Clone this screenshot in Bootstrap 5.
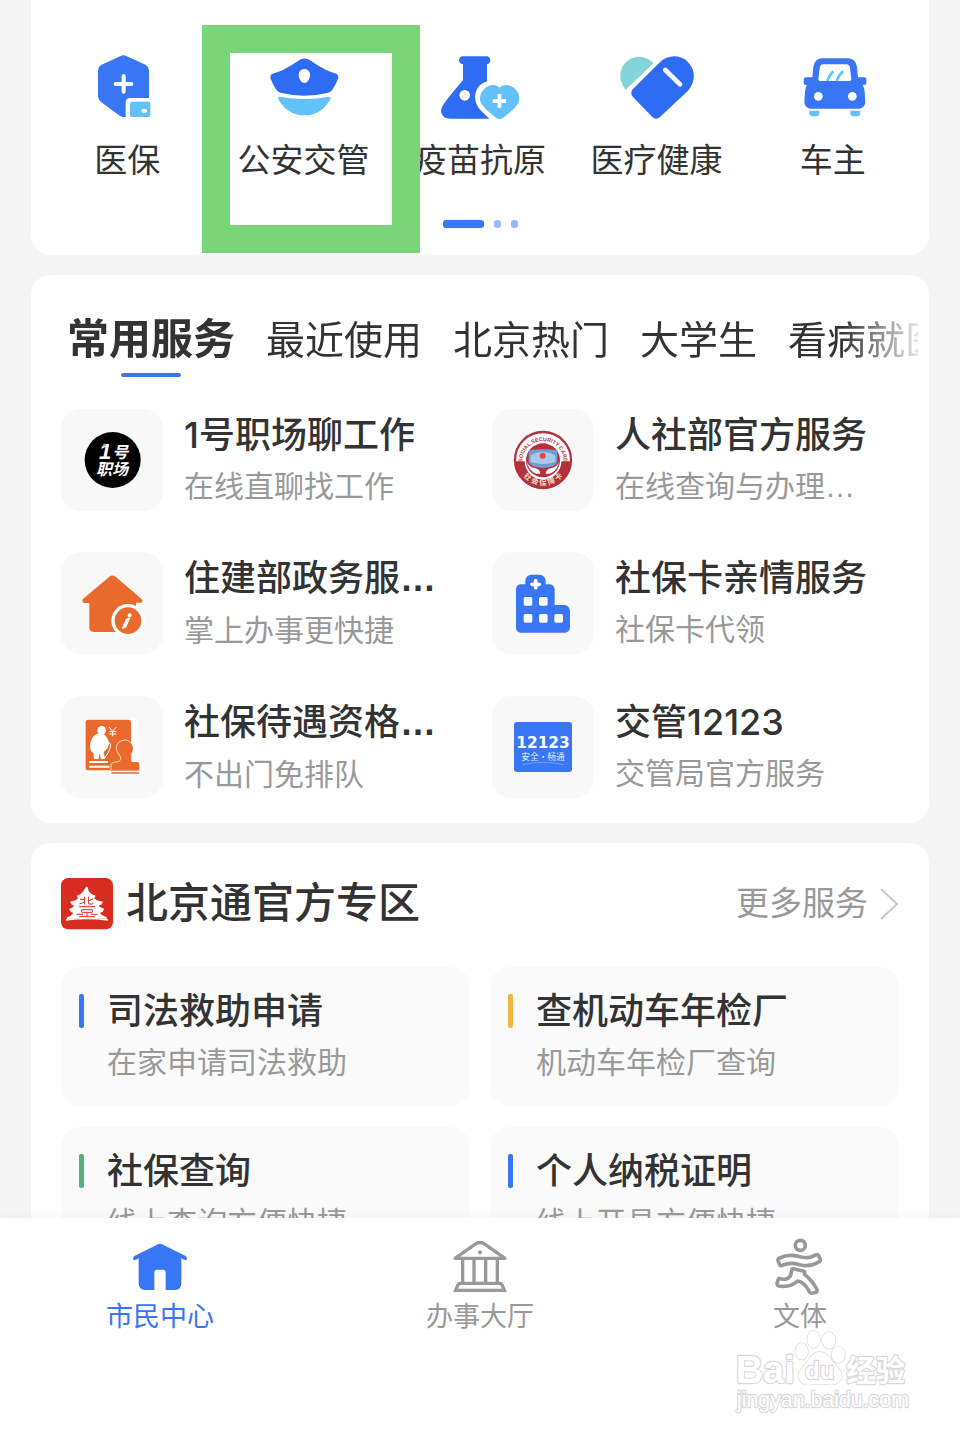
<!DOCTYPE html>
<html lang="zh-CN">
<head>
<meta charset="utf-8">
<meta name="viewport" content="width=device-width, initial-scale=1">
<title>市民中心</title>
<link rel="stylesheet" href="https://cdn.jsdelivr.net/npm/bootstrap@5.3.0/dist/css/bootstrap.min.css">
<style>
  :root { --ink: #333; --soft: #999; --blue: #3876f6; --sky: #63c1fa; }
  body { background: #f5f5f5; color: var(--ink); font-family: "Liberation Sans", "Noto Sans CJK SC", sans-serif; }
  a { color: inherit; text-decoration: none; }
  svg { display: block; flex: none; }
  .page-scroll { padding: 0 31px; overflow-y: auto; scrollbar-width: none; min-height: 0; }
  .page-scroll::-webkit-scrollbar { display: none; }
  .panel { background: #fff; border-radius: 20px; margin-bottom: 20px; }
  .panel-top { border-radius: 0 0 20px 20px; padding: 54px 8px 27px; }
  .quick { font-size: 33px; line-height: 42px; gap: 20px; flex: 1 1 0; white-space: nowrap; }
  .highlight-frame { position: absolute; top: -29px; left: -13px; right: -28px; height: 228px; border: 28px solid #7ad578; z-index: 2; pointer-events: none; }
  .dots { gap: 10px; padding-top: 38px; }
  .dots span { width: 7px; height: 8px; border-radius: 3px; background: #98bafa; }
  .dots .on { width: 41px; background: var(--blue); }
  .panel-services { padding: 32px 30px 22px; }
  .tabs-row { gap: 31px; margin: 0 -19px 30px 6px; height: 72px; overflow: hidden; white-space: nowrap; font-size: 39px; line-height: 68px;
    -webkit-mask-image: linear-gradient(to left, rgba(0,0,0,.12), #000 76px); mask-image: linear-gradient(to left, rgba(0,0,0,.12), #000 76px); }
  .tabs-row button { display: flex; align-items: flex-start; border: 0; padding: 0; background: none; color: inherit; font: inherit; line-height: inherit; flex: none; position: relative; }
  .tabs-row .current { font-size: 42px; font-weight: 700; line-height: 66px; }
  .tabs-row .current::after { content: ""; position: absolute; left: 50%; margin-left: -30px; width: 60px; bottom: 2px; height: 4px; border-radius: 2px; background: var(--blue); }
  .service-grid { display: grid; grid-template-columns: 1fr 1fr; column-gap: 24px; row-gap: 39px; }
  .service { gap: 21px; white-space: nowrap; }
  .tile { width: 102px; height: 102px; border-radius: 20px; background: #f8f8f8; }
  .item-title { font-family: Inter, "Liberation Sans", "Noto Sans CJK SC", sans-serif; font-size: 36px; font-weight: 500; line-height: 52px; }
  .dots3 { font-family: "Liberation Sans", sans-serif; font-weight: 700; }
  .item-sub { font-size: 30px; line-height: 52px; color: var(--soft); }
  .panel-zone { padding: 35px 30px 30px; margin-bottom: 0; }
  .zone-head { gap: 13px; }
  .zone-title { font-size: 42px; font-weight: 500; line-height: 52px; margin: 0; }
  .more { font-size: 33px; line-height: 52px; color: var(--soft); gap: 12px; }
  .zone-grid { display: grid; grid-template-columns: 1fr 1fr; gap: 21px 20px; margin-top: 37px; }
  .zone-item { background: #fafafa; border-radius: 20px; padding: 18px 18px 17px; gap: 23px; white-space: nowrap; }
  .zone-item::before { content: ""; flex: none; width: 5px; height: 34px; margin-top: 9px; border-radius: 2px; background: var(--bar); }
  .bar-blue { --bar: #3876f6; } .bar-amber { --bar: #f0b83c; } .bar-green { --bar: #54b284; }
  .tabbar { background: #fff; padding: 19px 0 95px; box-shadow: 0 -3px 10px rgba(0,0,0,.03); color: var(--soft); font-size: 27px; line-height: 41px; }
  .tabbar .active { color: var(--blue); }
  .watermark { position: absolute; right: 47px; bottom: 17px; }
</style>
</head>
<body class="vh-100 d-flex flex-column overflow-hidden">

<main class="page-scroll flex-grow-1">
  <section class="panel panel-top">
    <div class="d-flex">
      <a href="#" class="quick d-flex flex-column align-items-center">
        <svg width="84" height="66" viewBox="76 102 252 198">
          <path fill="#3876f6" d="M183 108q8-4 17 0l59 27q9 6 9 16v83h-56q-14 0-14 14v43h-8q-7-1-13-6l-54-40q-8-7-8-16v-78q0-10 9-16z"/>
          <path d="M192 168v47M168 192h47" stroke="#fff" stroke-width="12" stroke-linecap="round"/>
          <rect x="211" y="245" width="61" height="46" rx="6" fill="#63c1fa"/><rect x="246" y="267" width="16" height="11" rx="4" fill="#fff"/>
        </svg>
        <span>医保</span>
      </a>
      <a href="#" class="quick d-flex flex-column align-items-center position-relative">
        <svg width="84" height="66" viewBox="605 102 252 198">
          <path fill="#2f6cf4" d="M721 118q11-5 23 0 26 18 52 31 17 8 32 12 7 3 6 12-6 19-18 36-5 7-15 10-69 16-138 0-10-3-15-10-12-17-18-36-1-9 6-12 16-4 33-12 26-13 52-31z"/>
          <path fill="#fff" d="M732 147c10 0 17 8 17 17 0 12-8 25-17 25s-17-13-17-25c0-9 7-17 17-17z"/>
          <path fill="#63c1fa" d="M658 230q74 14 148 0 6 0 5 6c-17 32-44 50-79 50s-61-18-79-50q-1-6 5-6z"/>
        </svg>
        <span>公安交管</span>
        <i class="highlight-frame"></i>
      </a>
      <a href="#" class="quick d-flex flex-column align-items-center">
        <svg width="84" height="66" viewBox="84 102 252 198">
          <path fill="#2f6cf4" d="M155 109h77q9 3 9 12t-10 12v51c-38 12-49 58-16 90l23 22H118c-20 0-31-20-21-37 17-28 41-52 62-79v-47q-12-3-12-12t8-12z"/>
          <circle cx="164" cy="226" r="16" fill="#fff"/>
          <path fill="#63c1fa" d="M269 203c12-13 33-9 46 3 14 14 18 34 6 50-12 15-27 26-42 38q-10 6-20 0c-15-12-30-23-42-38-12-16-8-36 6-50 13-12 34-16 46-3z"/>
          <path fill="#fff" d="M263 222h11v16h14v11h-14v14h-11v-14h-15v-11h15z"/>
        </svg>
        <span>疫苗抗原</span>
      </a>
      <a href="#" class="quick d-flex flex-column align-items-center">
        <svg width="84" height="66" viewBox="613 102 252 198">
          <path fill="#83d3db" d="M648 209c-49-63 25-133 84-80z"/>
          <path fill="#2f6cf4" d="M669 208l80-80c26-26 63-24 85-3 25 24 24 62 1 87l-84 79q-12 10-23 0l-58-60q-10-12-1-23z"/>
          <path d="M767 150l44 43" stroke="#fff" stroke-width="14" stroke-linecap="round"/>
        </svg>
        <span>医疗健康</span>
      </a>
      <a href="#" class="quick d-flex flex-column align-items-center">
        <svg width="84" height="66" viewBox="1142 102 252 198">
          <path fill="#3876f6" d="M1235 115h78q24 2 27 26l3 31h20q5 1 5 6v13q-1 4-11 4 5 8 6 20l2 31q0 16-17 20h-149q-17-4-17-20l2-31q1-12 6-20-9 0-10-4v-13q0-5 5-6h21l3-31q3-24 26-26z"/>
          <path fill="#fff" d="M1238 133h70q10 1 11 11l4 33q0 5-4 6h-91q-4-1-4-6l4-33q2-10 10-11z"/>
          <path d="M1251 183q7-19 18-29M1279 183q7-19 19-29" fill="none" stroke="#63c1fa" stroke-width="8"/>
          <g fill="#fff"><circle cx="1224" cy="229" r="13"/><circle cx="1326" cy="229" r="13"/></g>
          <g fill="#63c1fa"><path d="M1197 272h30v9q-1 7-8 8h-14q-8-1-8-8zM1320 272h30v9q-1 7-8 8h-14q-8-1-8-8z"/></g>
        </svg>
        <span>车主</span>
      </a>
    </div>
    <div class="dots d-flex justify-content-center"><span class="on"></span><span></span><span></span></div>
  </section>

  <section class="panel panel-services">
    <div class="tabs-row d-flex" role="tablist">
      <button type="button" role="tab" class="current" aria-selected="true">常用服务</button>
      <button type="button" role="tab">最近使用</button>
      <button type="button" role="tab">北京热门</button>
      <button type="button" role="tab">大学生</button>
      <button type="button" role="tab">看病就医</button>
    </div>
    <div class="service-grid">
      <a href="#" class="service d-flex">
        <svg class="tile" viewBox="93 417 306 306">
          <circle cx="248" cy="570" r="84"/>
          <g fill="#fff" font-weight="700" font-style="italic" font-family="'Liberation Sans','Noto Sans CJK SC',sans-serif">
            <text x="207" y="567" font-size="66">1</text><text x="247" y="565" font-size="48">号</text><text x="198" y="616" font-size="48">职场</text>
          </g>
          <path fill="#4fd0b5" d="M221 521h9l-3 8h-9z"/>
        </svg>
        <div><div class="item-title">1号职场聊工作</div><div class="item-sub">在线直聊找工作</div></div>
      </a>
      <a href="#" class="service d-flex">
        <svg class="tile" viewBox="36 417 306 306">
          <circle cx="189" cy="570" r="84" fill="#fff" stroke="#b5313a" stroke-width="7"/>
          <path d="M106 574a83 83 0 0 0 166 0h-28a55 55 0 0 1-110 0z" fill="#b5313a"/>
          <circle cx="189" cy="571" r="51" fill="#b5313a"/>
          <path d="M139 570q4 20 24 24 18 4 18 17h-12q-24-8-30-41zM239 570q-4 20-24 24-18 4-18 17h12q24-8 30-41z" fill="#fff"/>
          <path d="M146 541q43-6 86 0v35q-5 16-43 18-38-2-43-18z" fill="#6d9fd4"/>
          <path d="M152 556q37-22 74 0v20q-37 12-74 0z" fill="#a9c8ea"/>
          <circle cx="188" cy="557" r="9" fill="#d8484a"/>
          <path id="arcTop" d="M127 575a62 62 0 0 1 124 0" fill="none"/>
          <path id="arcBottom" d="M113 570a76 76 0 0 0 152 0" fill="none"/>
          <g font-weight="700" text-anchor="middle" font-family="'Liberation Sans','Noto Sans CJK SC',sans-serif">
            <text font-size="16" fill="#b5313a"><textPath href="#arcTop" startOffset="50%">SOCIAL SECURITY CARD</textPath></text>
            <text font-size="22" fill="#f6dcc8"><textPath href="#arcBottom" startOffset="50%">社 会 保 障 卡</textPath></text>
          </g>
        </svg>
        <div><div class="item-title">人社部官方服务</div><div class="item-sub">在线查询与办理…</div></div>
      </a>
      <a href="#" class="service d-flex">
        <svg class="tile" viewBox="33 36 306 306">
          <path fill="#ea6a2e" d="M178 110q9-7 19 0l77 66q6 6 1 12H258v80q-2 8-10 8H130q-10-2-12-11V189h-16q-8-4-3-12z"/>
          <circle cx="234" cy="242" r="45" fill="#ea6a2e" stroke="#fff" stroke-width="10"/>
          <path fill="#fff" d="M228 238q5-6 13-5l-12 28q-7 7-14 4z"/><circle cx="239" cy="226" r="6" fill="#fff"/>
        </svg>
        <div><div class="item-title">住建部政务服<span class="dots3">…</span></div><div class="item-sub">掌上办事更快捷</div></div>
      </a>
      <a href="#" class="service d-flex">
        <svg class="tile" viewBox="36 36 306 306">
          <path fill="#3876f6" d="M108 147q1-12 13-14h15v-12q3-16 18-17h24q16 1 19 17v12h13q12 2 14 14v48h29q15 2 17 17v50q-1 14-14 16H122q-13-2-14-15z"/>
          <path d="M167 122v21M156 133h22" stroke="#fff" stroke-width="11" stroke-linecap="round"/>
          <g fill="#fff"><rect x="131" y="171" width="26" height="26" rx="5"/><rect x="177" y="171" width="26" height="26" rx="5"/><rect x="131" y="222" width="26" height="26" rx="5"/><rect x="177" y="222" width="26" height="26" rx="5"/><rect x="223" y="222" width="26" height="26" rx="5"/></g>
        </svg>
        <div><div class="item-title">社保卡亲情服务</div><div class="item-sub">社保卡代领</div></div>
      </a>
      <a href="#" class="service d-flex">
        <svg class="tile" viewBox="33 468 306 306">
          <rect x="108" y="537" width="160" height="166" fill="#fff"/>
          <rect x="107" y="539" width="136" height="152" rx="8" fill="#ea6a2e"/>
          <g fill="#fff"><circle cx="155" cy="571" r="13"/>
          <path d="M139 582q-19 11-19 40 1 14 10 16l2 19h14l2-18 5 18h12l-4-22q14-6 16-25-4-22-18-28-10-4-20 0z"/>
          <path d="M118 663h56v6h-56zM118 677h60v6h-60z"/></g>
          <path d="M170 606q14 0 11 14-2 14-18 35M177 561l11 13 11-13M188 574v15M178 575h21M178 582h21" fill="none" stroke="#fff" stroke-width="3"/>
          <path d="M182 692v-17q2-9 18-9 18-3 10-18-11-12-11-23a25 25 0 0 1 50 0q0 11-11 23-8 15 10 18h14q6 1 6 7v19z" fill="#ea6a2e"/>
          <path d="M183 690v-15q2-9 17-9 18-3 10-18-11-12-11-23a25 25 0 0 1 44-16" fill="none" stroke="#fbe3c0" stroke-width="3"/>
          <path d="M184 699h83" stroke="#ea6a2e" stroke-width="5"/><path d="M184 694h83" stroke="#fff" stroke-width="3"/>
        </svg>
        <div><div class="item-title">社保待遇资格<span class="dots3">…</span></div><div class="item-sub">不出门免排队</div></div>
      </a>
      <a href="#" class="service d-flex">
        <svg class="tile" viewBox="36 468 306 306">
          <rect x="102" y="546" width="174" height="150" rx="9" fill="#3876f6"/>
          <text x="189" y="624" font-size="46" font-weight="700" fill="#fff" text-anchor="middle" font-family="'DejaVu Sans',sans-serif">12123</text>
          <text x="189" y="659" font-size="26" fill="#dfe9ff" text-anchor="middle" font-family="'Noto Sans CJK SC',sans-serif">安全·畅通</text>
          <path d="M128 674q60-14 122 0" fill="none" stroke="#8fb4ff" stroke-width="2"/>
        </svg>
        <div><div class="item-title">交管12123</div><div class="item-sub">交管局官方服务</div></div>
      </a>
    </div>
  </section>

  <section class="panel panel-zone">
    <div class="d-flex align-items-center justify-content-between">
      <div class="zone-head d-flex align-items-center">
        <svg width="52" height="52" viewBox="63 54 156 156">
          <rect x="63" y="54" width="156" height="154" rx="22" fill="#d92c20"/>
          <path fill="#fff" d="M138 80h5l3 14q7 10 21 13l-4 8q6 8 26 10l-5 9-8 2q5 9 17 10l-5 9-8 3q5 9 20 13v6q-60-5-120 1l1-6q13-4 19-13l-8-4-5-9q10-1 16-9l-8-3-5-9q17-2 24-10l-4-8q13-3 20-13z"/>
          <path d="M78 180q62-9 126 0" fill="none" stroke="#fff" stroke-width="5"/>
          <path d="M134 110v23M120 118h13M118 132l15-6M146 110v22q8 2 14-2M147 122l12-6M117 140h48M125 149h32v8h-32zM141 158v12M109 163h20M153 163h20M118 170h46" fill="none" stroke="#d92c20" stroke-width="3"/>
        </svg>
        <h2 class="zone-title">北京通官方专区</h2>
      </div>
      <a href="#" class="more d-flex align-items-center">更多服务
        <svg width="19" height="32" viewBox="0 0 19 32" fill="none" stroke="#c8c8c8" stroke-width="2"><path d="M1 1l16 15L1 31"/></svg>
      </a>
    </div>
    <div class="zone-grid">
      <a href="#" class="zone-item bar-blue d-flex"><div><div class="item-title">司法救助申请</div><div class="item-sub">在家申请司法救助</div></div></a>
      <a href="#" class="zone-item bar-amber d-flex"><div><div class="item-title">查机动车年检厂</div><div class="item-sub">机动车年检厂查询</div></div></a>
      <a href="#" class="zone-item bar-green d-flex"><div><div class="item-title">社保查询</div><div class="item-sub">线上查询方便快捷</div></div></a>
      <a href="#" class="zone-item bar-blue d-flex"><div><div class="item-title">个人纳税证明</div><div class="item-sub">线上开具方便快捷</div></div></a>
    </div>
  </section>
</main>

<nav class="tabbar d-flex position-relative">
  <a href="#" class="active flex-fill w-100 d-flex flex-column align-items-center">
    <svg width="60" height="60" viewBox="270 351 180 180"><path fill="#3876f6" d="M354 373q6-3 12 0l71 35q6 5 3 11-3 2-7 0l-9-4v78q-2 15-16 17h-31v-54q-1-6-6-7h-22q-5 1-6 7v54h-30q-15-2-17-17v-78l-9 4q-4 2-7 0-3-6 3-11z"/></svg>
    <span>市民中心</span>
  </a>
  <a href="#" class="flex-fill w-100 d-flex flex-column align-items-center">
    <svg width="60" height="60" viewBox="1230 351 180 180" fill="none" stroke="#999" stroke-width="10" stroke-linejoin="round">
      <path d="M1245 415l63-44q12-7 24 0l63 44z"/><path d="M1268 420v69M1302 420v69M1337 420v69M1372 420v69"/><path stroke-linejoin="miter" d="M1247 511l7-17q2-4 6-4h120q4 0 6 4l7 17z"/><circle cx="1320" cy="397" r="6" fill="#999" stroke="none"/>
    </svg>
    <span>办事大厅</span>
  </a>
  <a href="#" class="flex-fill w-100 d-flex flex-column align-items-center">
    <svg width="60" height="60" viewBox="210 51 180 180" fill="none" stroke="#999" stroke-width="11" stroke-linejoin="round">
      <circle cx="301" cy="76" r="15"/>
      <path d="M234 122q-1-5 5-8 26-13 55-5 31 10 53-4 6-3 9 2l5 11q1 5-5 8-28 17-57 8-28-9-52 2-6 3-8-2z"/>
      <path d="M276 149q0-3 4-3l32 8q3 1 2 5v4q26 22 37 46 1 5-3 8l-13 3q-5 0-7-5-14-28-35-32-23 21-57 15-5-2-5-7l4-14q2-4 7-1 20 6 29-8z"/>
    </svg>
    <span>文体</span>
  </a>
  <svg class="watermark" width="180" height="88" viewBox="100 325 540 264" fill="#fff" stroke="#d9d9d9" stroke-width="7" stroke-linejoin="round" paint-order="stroke" aria-label="Baidu 经验">
    <g font-family="'Liberation Sans','Noto Sans CJK SC',sans-serif" font-weight="700">
      <text x="108" y="491" font-size="114">Bai</text>
      <g stroke-width="4"><ellipse cx="306" cy="395" rx="19" ry="25"/><ellipse cx="342" cy="359" rx="19" ry="26"/><ellipse cx="387" cy="362" rx="20" ry="25"/><ellipse cx="416" cy="405" rx="20" ry="25"/>
      <path d="M360 397q22 0 36 24 10 14 22 26 12 15 6 32-8 17-32 16-32-5-64 0-24 0-31-18-4-17 8-30 12-12 21-26 13-24 34-24z"/></g>
      <text x="316" y="479" font-size="72">du</text>
      <text x="440" y="484" font-size="88">经验</text>
      <text x="112" y="561" font-size="64" font-weight="400">jingyan.baidu.com</text>
    </g>
  </svg>
</nav>

<script src="https://cdn.jsdelivr.net/npm/bootstrap@5.3.0/dist/js/bootstrap.bundle.min.js"></script>
</body>
</html>
